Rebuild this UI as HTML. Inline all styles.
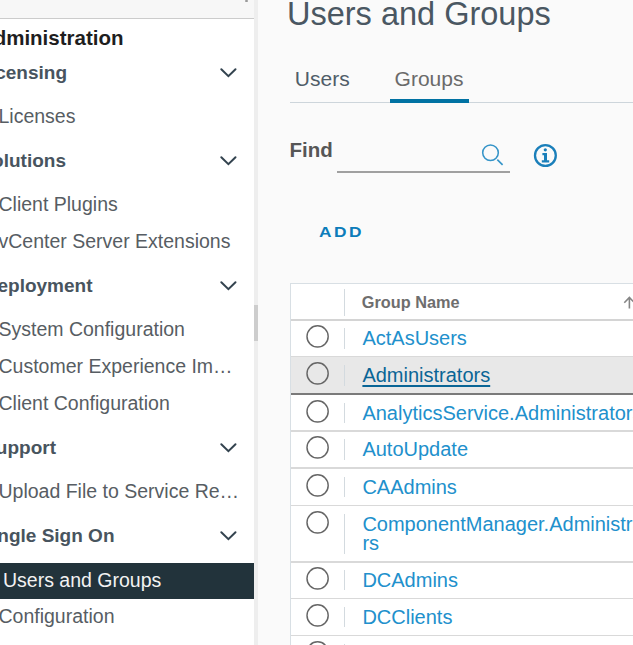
<!DOCTYPE html>
<html><head><meta charset="utf-8"><style>
html,body{margin:0;padding:0;width:633px;height:645px;overflow:hidden;background:#fafafa;}
.t{position:absolute;white-space:nowrap;font-family:"Liberation Sans",sans-serif;}
.r{position:absolute;display:block;}
</style></head><body>
<div class="r" style="left:0px;top:0px;width:254px;height:645px;background:#ffffff;"></div>
<div class="r" style="left:0px;top:0px;width:254px;height:18px;background:#f7f7f7;"></div>
<div class="r" style="left:0px;top:18px;width:254px;height:1px;background:#cccccc;"></div>
<div class="r" style="left:244.5px;top:0px;width:3px;height:2px;background:#9a9a9a;border-radius:1px;"></div>
<div class="r" style="left:254px;top:0px;width:4px;height:645px;background:#eeeeee;"></div>
<div class="r" style="left:254px;top:305px;width:4px;height:36px;background:#cdcdcd;"></div>
<div class="t" style="right:509.50px;text-align:right;top:28.26px;font-size:20.5px;line-height:20.5px;color:#1e1e1e;font-weight:700;">Administration</div>
<div class="t" style="right:566.00px;text-align:right;top:62.73px;font-size:19px;line-height:19px;color:#48545e;font-weight:700;">Licensing</div>
<svg class="r" style="left:219px;top:65.00px" width="20" height="16" viewBox="0 0 20 16"><polyline points="2.3,4.2 9.4,11.2 16.5,4.2" fill="none" stroke="#33434f" stroke-width="2.0" stroke-linecap="round"/></svg>
<div class="t" style="right:567.00px;text-align:right;top:150.73px;font-size:19px;line-height:19px;color:#48545e;font-weight:700;">Solutions</div>
<svg class="r" style="left:219px;top:153.00px" width="20" height="16" viewBox="0 0 20 16"><polyline points="2.3,4.2 9.4,11.2 16.5,4.2" fill="none" stroke="#33434f" stroke-width="2.0" stroke-linecap="round"/></svg>
<div class="t" style="right:540.50px;text-align:right;top:275.73px;font-size:19px;line-height:19px;color:#48545e;font-weight:700;">Deployment</div>
<svg class="r" style="left:219px;top:278.00px" width="20" height="16" viewBox="0 0 20 16"><polyline points="2.3,4.2 9.4,11.2 16.5,4.2" fill="none" stroke="#33434f" stroke-width="2.0" stroke-linecap="round"/></svg>
<div class="t" style="right:577.00px;text-align:right;top:437.73px;font-size:19px;line-height:19px;color:#48545e;font-weight:700;">Support</div>
<svg class="r" style="left:219px;top:440.00px" width="20" height="16" viewBox="0 0 20 16"><polyline points="2.3,4.2 9.4,11.2 16.5,4.2" fill="none" stroke="#33434f" stroke-width="2.0" stroke-linecap="round"/></svg>
<div class="t" style="right:518.50px;text-align:right;top:525.73px;font-size:19px;line-height:19px;color:#48545e;font-weight:700;">Single Sign On</div>
<svg class="r" style="left:219px;top:528.00px" width="20" height="16" viewBox="0 0 20 16"><polyline points="2.3,4.2 9.4,11.2 16.5,4.2" fill="none" stroke="#33434f" stroke-width="2.0" stroke-linecap="round"/></svg>
<div class="t" style="left:-1.50px;top:107.30px;font-size:19.5px;line-height:19.5px;color:#575d63;font-weight:400;">Licenses</div>
<div class="t" style="left:-1.50px;top:195.20px;font-size:19.5px;line-height:19.5px;color:#575d63;font-weight:400;">Client Plugins</div>
<div class="t" style="left:-1.50px;top:232.20px;font-size:19.5px;line-height:19.5px;color:#575d63;font-weight:400;">vCenter Server Extensions</div>
<div class="t" style="left:-1.50px;top:320.20px;font-size:19.5px;line-height:19.5px;color:#575d63;font-weight:400;">System Configuration</div>
<div class="t" style="left:-1.50px;top:357.20px;font-size:19.5px;line-height:19.5px;color:#575d63;font-weight:400;">Customer Experience Im…</div>
<div class="t" style="left:-1.50px;top:394.20px;font-size:19.5px;line-height:19.5px;color:#575d63;font-weight:400;">Client Configuration</div>
<div class="t" style="left:-1.50px;top:482.20px;font-size:19.5px;line-height:19.5px;color:#575d63;font-weight:400;">Upload File to Service Re…</div>
<div class="t" style="left:-1.50px;top:607.20px;font-size:19.5px;line-height:19.5px;color:#575d63;font-weight:400;">Configuration</div>
<div class="r" style="left:0px;top:563px;width:254px;height:36px;background:#22333b;"></div>
<div class="t" style="left:3.00px;top:570.70px;font-size:19.5px;line-height:19.5px;color:#f2f2f2;font-weight:400;">Users and Groups</div>
<div class="r" style="left:258px;top:0px;width:375px;height:645px;background:#fafafa;"></div>
<div class="t" style="left:287.00px;top:-1.89px;font-size:32.5px;line-height:32.5px;color:#4a5762;font-weight:400;">Users and Groups</div>
<div class="r" style="left:289.5px;top:102px;width:344px;height:1px;background:#cdd5db;"></div>
<div class="t" style="left:294.80px;top:68.23px;font-size:21px;line-height:21px;color:#4f5d68;font-weight:400;">Users</div>
<div class="t" style="left:394.60px;top:68.23px;font-size:21px;line-height:21px;color:#6a6a6a;font-weight:400;">Groups</div>
<div class="r" style="left:390px;top:99px;width:79px;height:4px;background:#0072a3;"></div>
<div class="t" style="left:289.50px;top:139.66px;font-size:20.5px;line-height:20.5px;color:#565656;font-weight:700;">Find</div>
<div class="r" style="left:336.5px;top:171px;width:173.5px;height:1.6px;background:#a0a0a0;"></div>
<svg class="r" style="left:478px;top:140px" width="30" height="30" viewBox="0 0 30 30"><circle cx="12.5" cy="12.7" r="7.8" fill="none" stroke="#3594c8" stroke-width="1.55"/><line x1="19.3" y1="19.6" x2="24.6" y2="24.9" stroke="#3594c8" stroke-width="1.6"/></svg>
<svg class="r" style="left:530px;top:140px" width="31" height="31" viewBox="0 0 31 31"><circle cx="15.4" cy="15.5" r="10.4" fill="none" stroke="#1a7fba" stroke-width="2.3"/><circle cx="15.3" cy="9.8" r="1.6" fill="#1a7fba"/><path d="M12.4 13.1 H17 V20.3 H19.2 V22.6 H11.8 V20.3 H14 V15.2 H12.4 Z" fill="#1a7fba"/></svg>
<div class="t" style="left:319.00px;top:225.48px;font-size:14.8px;line-height:14.8px;color:#0c7dba;font-weight:700;letter-spacing:2.1px;transform:scaleX(1.17);transform-origin:0 0;">ADD</div>
<div class="r" style="left:290px;top:283px;width:343px;height:362px;background:#ffffff;border-left:1px solid #d8dfe4;border-top:1px solid #d8dfe4;box-sizing:border-box;"></div>
<div class="r" style="left:291px;top:319px;width:343px;height:1.6px;background:#d4d4d4;"></div>
<div class="r" style="left:344px;top:289px;width:1px;height:27px;background:#d3dadf;"></div>
<div class="t" style="left:361.80px;top:294.41px;font-size:16.3px;line-height:16.3px;color:#6e6e6e;font-weight:700;">Group Name</div>
<svg class="r" style="left:618px;top:292px" width="16" height="20" viewBox="0 0 16 20"><path d="M11.4 16.6 V5.8 M6.3 10.8 L11.4 5.5 L16.5 10.8" fill="none" stroke="#858585" stroke-width="1.6"/></svg>
<div class="r" style="left:291px;top:356.2px;width:343px;height:1.5px;background:#d9d9d9;"></div>
<svg class="r" style="left:305px;top:324.30px" width="25" height="25" viewBox="0 0 25 25"><circle cx="12.6" cy="12.4" r="10.6" fill="none" stroke="#666666" stroke-width="1.45"/></svg>
<div class="r" style="left:344px;top:328.4px;width:1px;height:20.5px;background:#d3dadf;"></div>
<div class="t" style="left:362.40px;top:328.48px;font-size:20px;line-height:20px;color:#2190cc;font-weight:400;">ActAsUsers</div>
<div class="r" style="left:291px;top:357px;width:343px;height:37.5px;background:#e8e8e8;"></div>
<div class="r" style="left:291px;top:393.3px;width:343px;height:1.8px;background:#7a7a7a;"></div>
<svg class="r" style="left:305px;top:361.30px" width="25" height="25" viewBox="0 0 25 25"><circle cx="12.6" cy="12.4" r="10.6" fill="none" stroke="#666666" stroke-width="1.45"/></svg>
<div class="r" style="left:344px;top:365.4px;width:1px;height:21.0px;background:#d3dadf;"></div>
<div class="t" style="left:362.40px;top:365.48px;font-size:20px;line-height:20px;color:#0a6596;font-weight:400;text-decoration:underline;text-underline-offset:3px;">Administrators</div>
<div class="r" style="left:291px;top:430.2px;width:343px;height:1.5px;background:#d9d9d9;"></div>
<svg class="r" style="left:305px;top:398.80px" width="25" height="25" viewBox="0 0 25 25"><circle cx="12.6" cy="12.4" r="10.6" fill="none" stroke="#666666" stroke-width="1.45"/></svg>
<div class="r" style="left:344px;top:402.9px;width:1px;height:20.0px;background:#d3dadf;"></div>
<div class="t" style="left:362.40px;top:402.98px;font-size:20px;line-height:20px;color:#2190cc;font-weight:400;">AnalyticsService.Administrators</div>
<div class="r" style="left:291px;top:467.4px;width:343px;height:1.5px;background:#d9d9d9;"></div>
<svg class="r" style="left:305px;top:435.30px" width="25" height="25" viewBox="0 0 25 25"><circle cx="12.6" cy="12.4" r="10.6" fill="none" stroke="#666666" stroke-width="1.45"/></svg>
<div class="r" style="left:344px;top:439.4px;width:1px;height:20.69999999999999px;background:#d3dadf;"></div>
<div class="t" style="left:362.40px;top:439.48px;font-size:20px;line-height:20px;color:#2190cc;font-weight:400;">AutoUpdate</div>
<div class="r" style="left:291px;top:504.7px;width:343px;height:1.5px;background:#d9d9d9;"></div>
<svg class="r" style="left:305px;top:472.50px" width="25" height="25" viewBox="0 0 25 25"><circle cx="12.6" cy="12.4" r="10.6" fill="none" stroke="#666666" stroke-width="1.45"/></svg>
<div class="r" style="left:344px;top:476.59999999999997px;width:1px;height:20.80000000000001px;background:#d3dadf;"></div>
<div class="t" style="left:362.40px;top:476.68px;font-size:20px;line-height:20px;color:#2190cc;font-weight:400;">CAAdmins</div>
<div class="r" style="left:291px;top:561.0px;width:343px;height:1.5px;background:#d9d9d9;"></div>
<svg class="r" style="left:305px;top:509.80px" width="25" height="25" viewBox="0 0 25 25"><circle cx="12.6" cy="12.4" r="10.6" fill="none" stroke="#666666" stroke-width="1.45"/></svg>
<div class="r" style="left:344px;top:513.9px;width:1px;height:39.799999999999955px;background:#d3dadf;"></div>
<div class="t" style="left:362.40px;top:513.78px;font-size:20px;line-height:20px;color:#2190cc;font-weight:400;">ComponentManager.Administrato</div>
<div class="t" style="left:362.40px;top:533.08px;font-size:20px;line-height:20px;color:#2190cc;font-weight:400;">rs</div>
<div class="r" style="left:291px;top:597.7px;width:343px;height:1.5px;background:#d9d9d9;"></div>
<svg class="r" style="left:305px;top:566.10px" width="25" height="25" viewBox="0 0 25 25"><circle cx="12.6" cy="12.4" r="10.6" fill="none" stroke="#666666" stroke-width="1.45"/></svg>
<div class="r" style="left:344px;top:570.1999999999999px;width:1px;height:20.200000000000045px;background:#d3dadf;"></div>
<div class="t" style="left:362.40px;top:570.28px;font-size:20px;line-height:20px;color:#2190cc;font-weight:400;">DCAdmins</div>
<div class="r" style="left:291px;top:634.7px;width:343px;height:1.5px;background:#d9d9d9;"></div>
<svg class="r" style="left:305px;top:602.80px" width="25" height="25" viewBox="0 0 25 25"><circle cx="12.6" cy="12.4" r="10.6" fill="none" stroke="#666666" stroke-width="1.45"/></svg>
<div class="r" style="left:344px;top:606.9px;width:1px;height:20.5px;background:#d3dadf;"></div>
<div class="t" style="left:362.40px;top:606.98px;font-size:20px;line-height:20px;color:#2190cc;font-weight:400;">DCClients</div>
<div class="r" style="left:291px;top:671.2px;width:343px;height:1.5px;background:#d9d9d9;"></div>
<svg class="r" style="left:305px;top:639.80px" width="25" height="25" viewBox="0 0 25 25"><circle cx="12.6" cy="12.4" r="10.6" fill="none" stroke="#666666" stroke-width="1.45"/></svg>
<div class="r" style="left:344px;top:643.9px;width:1px;height:20.0px;background:#d3dadf;"></div>
</body></html>
